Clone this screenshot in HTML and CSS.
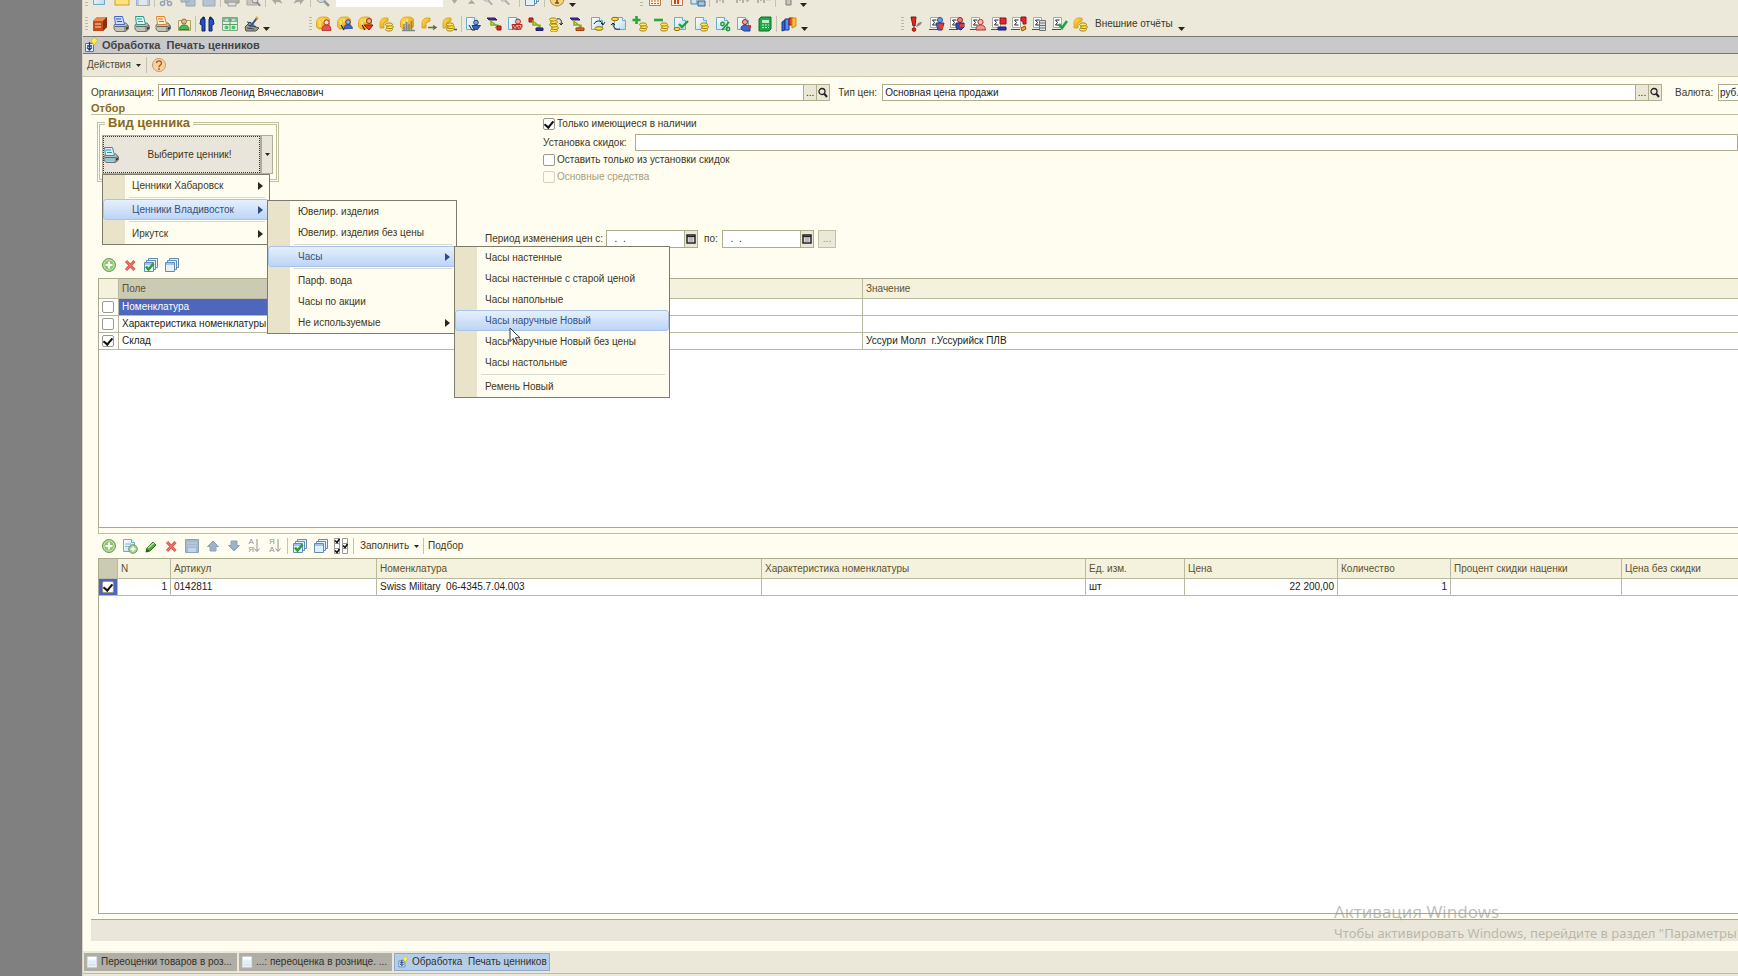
FILE: index.html
```html
<!DOCTYPE html>
<html lang="ru">
<head>
<meta charset="utf-8">
<title>Обработка Печать ценников</title>
<link rel="stylesheet" href="styles.css">
</head>
<body>
<svg class="sprite" aria-hidden="true">
  <defs>
    <linearGradient id="gold" x1="0" y1="0" x2="1" y2="1"><stop offset="0" stop-color="#ffe45a"/><stop offset="1" stop-color="#e09400"/></linearGradient>
    <linearGradient id="pageFill" x1="0" y1="0" x2="1" y2="1"><stop offset="0" stop-color="#fff"/><stop offset="1" stop-color="#b5dcec"/></linearGradient>
  </defs>
  <symbol id="doc" viewBox="0 0 16 16"><path d="M1.500 1.500h8l3 3v9h-11z" fill="url(#pageFill)" stroke="#6aacca"/><path d="M9.500 1.500v3h3" fill="#fff" stroke="#6aacca"/></symbol>
  <symbol id="coins" viewBox="0 0 16 16"><g fill="#ffe65a" stroke="#a07a08" stroke-width=".9"><ellipse cx="10" cy="13.500" rx="3.500" ry="1.600"/><ellipse cx="11" cy="11" rx="3.500" ry="1.600"/><ellipse cx="10" cy="8.500" rx="3.500" ry="1.600"/></g></symbol>
  <symbol id="bag" viewBox="0 0 16 16"><path d="M.5 11V7c0-4 2.500-6 6-6h4l3 2v8l-4 2H3z" fill="url(#gold)" stroke="#dd9a14" stroke-width=".8"/><path d="M4 5v6M7 3v3" stroke="#fff4a8"/></symbol>
  <symbol id="bagS" viewBox="0 0 16 16"><path d="M1 12V8c0-4 2-6 5-6h3v3L5 7v5z" fill="url(#gold)" stroke="#dd9a14" stroke-width=".8"/></symbol>
  <symbol id="manR" viewBox="0 0 16 16"><circle cx="10.500" cy="6.500" r="2.600" fill="#ffd9b8" stroke="#a33"/><path d="M6 14.500c0-4 1.500-5.500 4.500-5.500s4.500 1.500 4.500 5.500z" fill="#e8524a" stroke="#a31c18" stroke-width=".7"/></symbol>
  <symbol id="manB" viewBox="0 0 16 16"><circle cx="11" cy="6" r="2.300" fill="#8fb2ea" stroke="#3b3f8a"/><path d="M4 9l3 5M7 11.500h3" stroke="#222" stroke-width="1.200"/><path d="M7 12.500c0-3 1.500-4 4-4s4 1 4.500 4z" fill="#3b68ce" stroke="#213c96" stroke-width=".7"/></symbol>
  <symbol id="sigma" viewBox="0 0 16 16"><path d="M1.500 1.500h8v10h-8z" fill="#fff" stroke="#aaa"/><path d="M7.500 4h-4l2 2.500-2 2.500h4" fill="none" stroke="#222"/><path d="M0 13.500h9" stroke="#334b9c"/></symbol>
  <symbol id="printer" viewBox="0 0 16 16"><path d="M1 9l3-2h9l2.500 3v3l-3 2.500H3L1 13z" fill="#c3c3b8" stroke="#666" stroke-width=".9"/><path d="M2 10.500h10l3-1M12 11v4" stroke="#666" fill="none"/><path d="M13 11.500l2-1v2l-2 1.500z" fill="#333"/></symbol>
  <symbol id="flow" viewBox="0 0 16 16"><path d="M5 4v5h6M6 6l6 5M9 11.500h3v-3" fill="none" stroke="#8aac1c" stroke-width="1.600"/></symbol>
  <symbol id="plus" viewBox="0 0 16 16"><circle cx="8" cy="8" r="6.500" fill="#8cc56a" stroke="#6f9c60"/><circle cx="8" cy="8" r="5.200" fill="none" stroke="#d7efc8" stroke-width=".8"/><path d="M8 4.500v7M4.500 8h7" stroke="#fff" stroke-width="2.200"/></symbol>
  <symbol id="cross" viewBox="0 0 16 16"><path d="M4 4l8.500 9M12.500 4L4 13" stroke="#d9534a" stroke-width="3"/><path d="M4 4l8.500 9M12.500 4L4 13" stroke="#f08a80" stroke-width="1"/></symbol>
  <symbol id="stack" viewBox="0 0 16 16"><g fill="#e4f1fb" stroke="#5f8db3"><path d="M5.500 1.500h9v9h-9z"/><path d="M3.500 3.500h9v9h-9z"/><path d="M1.500 5.500h9v9h-9z"/></g><path d="M2 6h8v2H2z" fill="#9cc6ea"/></symbol>
  <symbol id="stackCheck" viewBox="0 0 16 16"><use href="#stack"/><path d="M3 9.500l2.500 3 5-6" fill="none" stroke="#2f9a3e" stroke-width="2.600"/></symbol>
  <symbol id="lens" viewBox="0 0 12 12"><circle cx="5" cy="4.500" r="3" fill="none" stroke="#222" stroke-width="1.300"/><path d="M7.500 7l2.500 3" stroke="#222" stroke-width="2"/></symbol>
  <symbol id="cal" viewBox="0 0 10 10"><path d="M1 1h8v8H1z" fill="#fff" stroke="#222" stroke-width="1.500"/><path d="M1 2.500h8" stroke="#222" stroke-width="1.500"/><path d="M2 5h6M2 7h6M4 3v5M6 3v5" stroke="#777" stroke-width=".6"/></symbol>
  <symbol id="proc" viewBox="0 0 16 16"><path d="M2.500 6.500h8v8h-8z" fill="#e8f1fa" stroke="#5277a4"/><path d="M6.500 5v8M4 10.500l2.500 2.500L9 10.500M4 9h5" stroke="#1b3f7a" fill="none" stroke-width="1.300"/><path d="M11 0l3.500 3.500L11 8 8 4z" fill="#ffee4d" stroke="#d2b42a" stroke-width=".8"/></symbol>
  <symbol id="paper" viewBox="0 0 16 16"><path d="M1.500.5h13v15h-13z" fill="#fff" stroke="#b5c4ce"/><path d="M3 5h10v9H3z" fill="#d5e7f3"/><path d="M3 6.500h10M3 9.500h10" stroke="#fff"/></symbol>
  <symbol id="down" viewBox="0 0 7 4"><path d="M0 0h7L3.500 4z" fill="#2e2614"/></symbol>
  <symbol id="right" viewBox="0 0 5 8"><path d="M0 0l5 4-5 4z" fill="currentColor"/></symbol>
</svg>

<div class="desktop">
<main class="window">

  <header class="toolbars">
    <div class="bar bar-top">
      <span class="grip"></span>
      <div class="group t-a">
        <svg class="ic"><use href="#doc"/></svg>
        <svg class="ic" viewBox="0 0 16 16"><path d="M1 3h5l1 2h8v9H1z" fill="#ffe27a" stroke="#c9a02d"/></svg>
        <svg class="ic" viewBox="0 0 16 16"><path d="M1.500 1.500h13v13h-13z" fill="#b9cadb" stroke="#9cb0c4"/><path d="M4 9h8v5H4z" fill="#dfe7ee"/></svg>
      </div>
      <span class="sep"></span>
      <div class="group t-a">
        <svg class="ic" viewBox="0 0 16 16"><path d="M5 1l5 10M11 1L6 11" stroke="#93a2b8" stroke-width="1.500"/><circle cx="4.500" cy="12.500" r="2" fill="none" stroke="#93a2b8" stroke-width="1.500"/><circle cx="11.500" cy="12.500" r="2" fill="none" stroke="#93a2b8" stroke-width="1.500"/></svg>
        <svg class="ic" viewBox="0 0 16 16"><path d="M1 2h8v9H1zM6 6h9v9H6z" fill="#b3c0cd" stroke="#94a6b9"/></svg>
        <svg class="ic" viewBox="0 0 16 16"><path d="M2 2h12v13H2z" fill="#b7c3d1" stroke="#9baabb"/></svg>
      </div>
      <span class="sep"></span>
      <div class="group t-b">
        <svg class="ic" viewBox="0 0 16 16"><path d="M1 7h14v5H1z" fill="#b5b2ab" stroke="#918f89"/><path d="M4 11h8v4H4z" fill="#ddd" stroke="#999"/></svg>
        <svg class="ic" viewBox="0 0 16 16"><path d="M1 1h10v13H1z" fill="#c9c6bd" stroke="#aaa79f"/><circle cx="9" cy="9" r="3" fill="#ddd" stroke="#888"/><path d="M11 11l3 4" stroke="#888" stroke-width="2"/></svg>
      </div>
      <span class="sep"></span>
      <div class="group t-b">
        <svg class="ic" viewBox="0 0 16 16"><path d="M3 9l4-4v3c4 0 6 2 6 5-2-2-3-2-6-2v3z" fill="#aaa8a0"/></svg>
        <svg class="ic" viewBox="0 0 16 16"><path d="M13 9L9 5v3c-4 0-6 2-6 5 2-2 3-2 6-2v3z" fill="#aaa8a0"/></svg>
      </div>
      <span class="sep"></span>
      <div class="group t-c t-find">
        <svg class="ic" viewBox="0 0 16 16"><circle cx="6" cy="7" r="4.500" fill="#cfd6dd" stroke="#9aa0a6"/><path d="M9 10l5 5" stroke="#999" stroke-width="2.500"/></svg>
      </div>
      <input class="search" type="text" aria-label="Поиск">
      <div class="group t-d">
        <svg class="ic" viewBox="0 0 16 16"><path d="M5 9h6l-3 4z" fill="#aaa8a0"/></svg>
        <svg class="ic" viewBox="0 0 16 16"><path d="M8 9l4 4H4z" fill="#aaa8a0"/></svg>
        <svg class="ic" viewBox="0 0 16 16"><circle cx="6" cy="7" r="3.500" fill="#ddd" stroke="#aaa"/><path d="M8 10l4 4" stroke="#aaa" stroke-width="2"/></svg>
        <svg class="ic" viewBox="0 0 16 16"><circle cx="6" cy="7" r="3.500" fill="#ddd" stroke="#aaa"/><path d="M8 10l4 4" stroke="#aaa" stroke-width="2"/></svg>
      </div>
      <span class="sep"></span>
      <div class="group t-c"><svg class="ic"><use href="#stack"/></svg></div>
      <span class="sep"></span>
      <div class="group t-c"><svg class="ic" viewBox="0 0 16 16"><circle cx="8" cy="8" r="7" fill="#f6d27c" stroke="#b5883a"/><path d="M8 6v6M6 12h4" stroke="#7a5520" stroke-width="1.600"/></svg></div>
      <svg class="drop drop-top"><use href="#down"/></svg>
      <span class="grip grip-calc"></span>
      <div class="group t-a">
        <svg class="ic" viewBox="0 0 16 16"><path d="M2.500 1.500h11v13h-11z" fill="#fff3dd" stroke="#c07a4a"/><path d="M4 7h8M4 10h8M4 12.500h8" stroke="#c0602f" stroke-dasharray="2 1"/></svg>
        <svg class="ic" viewBox="0 0 16 16"><path d="M2.500 1.500h11v13h-11z" fill="#fdeee6" stroke="#c77459"/><path d="M9 5v8M6 8v5" stroke="#d0431f" stroke-width="2"/></svg>
        <svg class="ic" viewBox="0 0 16 16"><path d="M1 8h6v5H1z" fill="#cfe5f5" stroke="#4f86b4"/><path d="M8 10h7v5H8z" fill="#9cc6e0" stroke="#33658d"/></svg>
      </div>
      <span class="sep"></span>
      <div class="group t-a">
        <svg class="ic" viewBox="0 0 16 16"><path d="M4 12V5l3 4 3-4v7" fill="none" stroke="#aaa8a0" stroke-width="1.700"/></svg>
        <svg class="ic" viewBox="0 0 16 16"><path d="M2 12V5l3 4 3-4v7M10 8.500h5M12.500 6v5" fill="none" stroke="#aaa8a0" stroke-width="1.700"/></svg>
        <svg class="ic" viewBox="0 0 16 16"><path d="M2 12V5l3 4 3-4v7M10 8.500h5" fill="none" stroke="#aaa8a0" stroke-width="1.700"/></svg>
      </div>
      <span class="sep"></span>
      <div class="group t-c"><svg class="ic" viewBox="0 0 16 16"><path d="M6 2h5v12H6z" fill="#c6c4bb" stroke="#807e76"/></svg></div>
      <svg class="drop drop-top"><use href="#down"/></svg>
    </div>

    <div class="bar bar-main">
      <span class="grip"></span>
      <div class="group m-a">
        <svg class="ic" viewBox="0 0 16 16"><path d="M1 5l4-4h10v10l-4 4H1z" fill="#c44c1c"/><path d="M1 5l4-4h10l-4 4z" fill="#e98a4c"/><path d="M11 5l4-4v10l-4 4z" fill="#8c300e"/><path d="M3 8h6M3 11h6" stroke="#ffd9a5"/></svg>
        <svg class="ic" viewBox="0 0 16 16"><use href="#printer"/><path d="M1.500.5h8l2 8h-9z" fill="#cfdcff" stroke="#4668c8"/><path d="M3 3h5M4 5.500h5" stroke="#3454b8"/></svg>
        <svg class="ic" viewBox="0 0 16 16"><use href="#printer"/><path d="M1.500.5h8l2 8h-9z" fill="#e0f6f0" stroke="#2d9a8a"/><path d="M3 3h5M4 5.500h5" stroke="#26a08c"/></svg>
        <svg class="ic" viewBox="0 0 16 16"><use href="#printer"/><path d="M1.500.5h8l2 8h-9z" fill="#fff0d4" stroke="#e0872a"/><path d="M3 3h5M4 5.500h5" stroke="#e05f20"/></svg>
        <svg class="ic" viewBox="0 0 16 16"><path d="M2.500 4.500h12v10h-12z" fill="#f7efc0" stroke="#a9a066"/><circle cx="8" cy="5.500" r="2.500" fill="#e9b48c" stroke="#9a6b3a"/><path d="M3.500 13.500c0-3.500 2-4.500 4.500-4.500s5 1 5 4.500z" fill="#47b866" stroke="#25823f"/></svg>
      </div>
      <span class="sep"></span>
      <div class="group m-b">
        <svg class="ic" viewBox="0 0 16 16"><path d="M2 3l3-1 1 1v12H3V9L1 8zM14 3l-3-1-1 1v12h3V9l2-1z" fill="#2250c8" stroke="#10236b"/><circle cx="4.500" cy="2" r="1.500" fill="#17235f"/><circle cx="11.500" cy="2" r="1.500" fill="#17235f"/></svg>
        <svg class="ic" viewBox="0 0 16 16"><path d="M.5 1.500h15v13H.5z" fill="#dff3df" stroke="#7da588"/><path d="M1 2h14v4H1z" fill="#86b896"/><path d="M8 2v12M1 8.500h14" stroke="#5f9a6e"/><path d="M3 4h3M10 4h3" stroke="#fff"/><circle cx="4.500" cy="11.500" r="2" fill="#45c868"/><circle cx="11.500" cy="11.500" r="2" fill="#45c868"/></svg>
        <svg class="ic" viewBox="0 0 16 16"><path d="M1 11l5-5 6 5 3 1-3 3H2z" fill="#9ca07c" stroke="#4c4f40"/><path d="M3 6l4 1M4 9l8 2M3 12l7 1" stroke="#2c436e"/><path d="M6 11l7-9" stroke="#35548e" stroke-width="2"/><path d="M12 1l2 2" stroke="#d7a63a" stroke-width="2"/></svg>
      </div>
      <svg class="drop drop-main"><use href="#down"/></svg>
      <span class="grip grip-second"></span>
      <div class="group m-c">
        <svg class="ic"><use href="#bag"/><use href="#manR"/></svg>
        <svg class="ic"><use href="#bag"/><use href="#manB"/></svg>
        <svg class="ic" viewBox="0 0 16 16"><use href="#bag"/><circle cx="11" cy="5" r="2.500" fill="#f2ad8c" stroke="#8c2c1c"/><path d="M4 9l3 5" stroke="#222" stroke-width="1.200"/><path d="M6 9h9l-4 5z" fill="#e23a2c" stroke="#8c1b10"/></svg>
        <svg class="ic"><use href="#bagS"/><use href="#coins"/></svg>
        <svg class="ic" viewBox="0 0 16 16"><use href="#bag"/><path d="M4 15V8M6.500 15V6M9 15V8M11.500 15V5M2 14.500h13" stroke="#7a868e" stroke-width="1.400"/></svg>
        <svg class="ic" viewBox="0 0 16 16"><use href="#bagS"/><path d="M7 11.500h7M12 9.500l3 2-3 2" stroke="#686a50" stroke-width="1.500" fill="none"/></svg>
        <svg class="ic" viewBox="0 0 16 16"><use href="#bagS"/><use href="#coins" x="-2"/><path d="M12 13.500h3" stroke="#555" stroke-width="1.500"/></svg>
      </div>
      <span class="sep"></span>
      <div class="group m-d">
        <svg class="ic" viewBox="0 0 16 16"><use href="#doc"/><circle cx="11" cy="6.500" r="2.300" fill="#7aa5da" stroke="#24478a"/><path d="M4 9l3 5h3" stroke="#222" fill="none"/><path d="M7 9.500h8.500l-3 4H9z" fill="#3464b4" stroke="#1f3e7e"/></svg>
        <svg class="ic" viewBox="0 0 16 16"><path d="M1 2h8l2 2H3z" fill="#5130b4" stroke="#2c1973"/><use href="#flow"/><path d="M11 10h4v4h-4z" fill="#e3262a" stroke="#961014"/></svg>
        <svg class="ic" viewBox="0 0 16 16"><use href="#doc"/><circle cx="11" cy="5.500" r="2.500" fill="#f7a49c" stroke="#b2362c"/><path d="M5 8.500h10v3l-3 2-6-1z" fill="#f0948c" stroke="#ad2b22"/><path d="M5 14l3-5 3 5M9 14l3-4 2 4" stroke="#a03830" fill="none"/></svg>
        <svg class="ic" viewBox="0 0 16 16"><path d="M1 2h4v4H1z" fill="#e3262a" stroke="#961014"/><use href="#flow"/><path d="M8 12h7v2.500H8z" fill="#3430a4" stroke="#1f1b6e"/></svg>
        <svg class="ic" viewBox="0 0 16 16"><use href="#coins" x="-5" y="-5"/><use href="#coins" x="-4" y="1"/><path d="M9 3c4-1 5 2 4 5M11.500 7l1.500 2 2-2" fill="none" stroke="#222"/></svg>
        <svg class="ic" viewBox="0 0 16 16"><path d="M1 2h8l2 2H3z" fill="#5130b4" stroke="#2c1973"/><use href="#flow"/><path d="M7 12h8v2.500H7z" fill="#e96c20" stroke="#9a3d08"/></svg>
        <svg class="ic" viewBox="0 0 16 16"><use href="#doc"/><path d="M4 8c2-4 7-4 9 0M11 7l2 2 2-3" fill="none" stroke="#222"/><ellipse cx="9" cy="12.500" rx="4" ry="1.800" fill="#ffe04a" stroke="#8f6c00"/></svg>
        <svg class="ic" viewBox="0 0 16 16"><use href="#doc" x="2"/><path d="M2 8c0 4 3 6 7 5M0 9l2-2 2 2" fill="none" stroke="#222"/><ellipse cx="4" cy="3" rx="3.500" ry="1.700" fill="#ffe04a" stroke="#8f6c00"/></svg>
        <svg class="ic" viewBox="0 0 16 16"><use href="#coins" x="1"/><path d="M4.500 0v8M.5 4h8" stroke="#2ba63a" stroke-width="2.600"/></svg>
        <svg class="ic" viewBox="0 0 16 16"><use href="#coins" x="1"/><path d="M1 4h9" stroke="#2ba63a" stroke-width="2.600"/></svg>
        <svg class="ic" viewBox="0 0 16 16"><use href="#doc"/><path d="M6 8l3 3 6-6" fill="none" stroke="#23a04a" stroke-width="2.400"/><ellipse cx="4" cy="13" rx="3" ry="1.600" fill="#ffe04a" stroke="#8f6c00"/></svg>
        <svg class="ic"><use href="#doc"/><use href="#coins"/></svg>
        <svg class="ic" viewBox="0 0 16 16"><use href="#doc"/><path d="M7 14l7-8" stroke="#1e9a3e" stroke-width="1.700"/><circle cx="7.500" cy="8" r="1.700" fill="none" stroke="#1e9a3e" stroke-width="1.500"/><circle cx="13" cy="13" r="1.700" fill="none" stroke="#1e9a3e" stroke-width="1.500"/></svg>
        <svg class="ic" viewBox="0 0 16 16"><use href="#doc"/><circle cx="9" cy="6" r="2.500" fill="#f2a38c" stroke="#a3202a"/><path d="M5 13c0-3 2-4 4-4l5 1v5H8z" fill="#3b68ce" stroke="#213c96"/><path d="M10 9h5v3h-3z" fill="#e1302a"/></svg>
        <svg class="ic" viewBox="0 0 16 16"><path d="M2 3l2-2h10v12l-2 2H2z" fill="#1fa748" stroke="#0f6f2c"/><path d="M5 4h7v3H5z" fill="#b9f0c3"/><path d="M5 9h7M5 11.500h7" stroke="#c9f5cf" stroke-dasharray="2 1"/></svg>
      </div>
      <span class="sep"></span>
      <div class="group m-e">
        <svg class="ic" viewBox="0 0 16 16"><path d="M1 6l3-2v10l-3 1z" fill="#2f66d8" stroke="#17388e"/><path d="M4 3h4v11H4z" fill="#5b91ee" stroke="#17388e"/><path d="M8 2h4v7H8z" fill="#e3402c" stroke="#8f1c10"/><path d="M11 2h4v8l-4 2z" fill="#ffbf2e" stroke="#c88c10"/></svg>
      </div>
      <svg class="drop drop-main"><use href="#down"/></svg>
      <span class="grip grip-third"></span>
      <div class="group m-f">
        <svg class="ic" viewBox="0 0 16 16"><path d="M3 1h5L7 10H5z" fill="#e0291f" stroke="#941209"/><circle cx="6" cy="13.500" r="1.800" fill="#e0291f" stroke="#941209"/><path d="M8 11c1-4 3-5 6-5-1 3-3 4-6 5z" fill="#8b8678"/></svg>
        <svg class="ic" viewBox="0 0 16 16"><use href="#sigma"/><circle cx="11" cy="4" r="2.500" fill="#69a2e8" stroke="#2450a0"/><path d="M7 7h8l-2 7H9z" fill="#3b68ce" stroke="#213c96"/><path d="M9 8h5v5h-4z" fill="#e33830"/></svg>
        <svg class="ic" viewBox="0 0 16 16"><use href="#sigma"/><circle cx="11" cy="4" r="2.500" fill="#ef8078" stroke="#a32018"/><path d="M7 7h8v4l-3 3-5-2z" fill="#3c47b4" stroke="#23297c"/><path d="M11 8h4v3h-4z" fill="#e33830"/></svg>
        <svg class="ic" viewBox="0 0 16 16"><use href="#sigma"/><circle cx="10.500" cy="6" r="2.600" fill="#f7c4b0" stroke="#a33"/><path d="M6 14c0-4 1.500-5 4.500-5s4.500 1 5 5z" fill="#f0948c" stroke="#a33830"/></svg>
        <svg class="ic" viewBox="0 0 16 16"><use href="#sigma"/><path d="M9 2h6v6H9z" fill="#e3262a" stroke="#961014"/><path d="M7 11h8v3H7z" fill="#2f35b4" stroke="#1b1f70"/></svg>
        <svg class="ic" viewBox="0 0 16 16"><use href="#sigma"/><path d="M10 1h5v7h-3V5h-2z" fill="#e3262a" stroke="#961014"/><path d="M10 12l4-2 1 3-4 2z" fill="#f0a42c" stroke="#8a5a08"/></svg>
        <svg class="ic" viewBox="0 0 16 16"><use href="#sigma"/><path d="M7.500 4.500h6v10h-6z" fill="#dde0e2" stroke="#6d7478"/><path d="M7 7h7M7 9.500h7M7 12h7" stroke="#6d7478"/></svg>
        <svg class="ic" viewBox="0 0 16 16"><use href="#sigma"/><path d="M7 8l3 4 5-7" fill="none" stroke="#23a04a" stroke-width="2.600"/></svg>
        <svg class="ic"><use href="#bagS"/><use href="#coins"/></svg>
      </div>
      <button class="text-button reports" type="button">Внешние отчёты</button>
      <svg class="drop drop-main drop-reports"><use href="#down"/></svg>
    </div>
  </header>

  <h1 class="titlebar"><svg class="ic"><use href="#proc"/></svg><span>Обработка&nbsp; Печать ценников</span></h1>

  <div class="actions">
    <button class="text-button" type="button">Действия <svg class="caret"><use href="#down"/></svg></button>
    <span class="sep"></span>
    <button class="icon-button help" type="button" aria-label="Справка">
      <svg class="ic" viewBox="0 0 16 16"><circle cx="8" cy="8" r="6.500" fill="#fbd3a0" stroke="#c99a68"/><path d="M5.500 6.300c0-3.200 5-3.200 5 0 0 2-2.500 1.700-2.500 4" fill="none" stroke="#a0602c" stroke-width="1.400"/><circle cx="8" cy="12" r=".9" fill="#a0602c"/></svg>
    </button>
  </div>

  <form class="form">
    <div class="row-head">
      <label for="org">Организация:</label>
      <div class="combo combo-org"><input id="org" type="text" value="ИП Поляков Леонид Вячеславович"><button type="button">...</button><button type="button" aria-label="Открыть"><svg class="lens"><use href="#lens"/></svg></button></div>
      <label class="lab-type" for="ptype">Тип цен:</label>
      <div class="combo combo-type"><input id="ptype" type="text" value="Основная цена продажи"><button type="button">...</button><button type="button" aria-label="Открыть"><svg class="lens"><use href="#lens"/></svg></button></div>
      <label class="lab-cur" for="cur">Валюта:</label>
      <div class="combo combo-cur"><input id="cur" type="text" value="руб."></div>
    </div>

    <h2 class="section">Отбор</h2>

    <div class="filters">
      <fieldset class="kind">
        <legend>Вид ценника</legend>
        <div class="split">
          <button class="split-main" type="button">
            <svg class="ic" viewBox="0 0 16 16"><use href="#printer"/><path d="M1.500.5h8l2 8h-9z" fill="#d3f1f5" stroke="#3f8ea6"/><path d="M3 3h5M4 5.500h5" stroke="#3f8ea6"/><path d="M2 11h10v3H2z" fill="#8fc6d4"/></svg>
            <span>Выберите ценник!</span>
          </button>
          <button class="split-drop" type="button" aria-label="Открыть меню"><svg class="caret"><use href="#down"/></svg></button>

          <ul class="menu menu-city">
            <li><button type="button">Ценники Хабаровск</button><svg class="more"><use href="#right"/></svg></li>
            <li class="line"></li>
            <li class="open"><button type="button">Ценники Владивосток</button><svg class="more"><use href="#right"/></svg>
              <ul class="menu menu-goods">
                <li><button type="button">Ювелир. изделия</button></li>
                <li><button type="button">Ювелир. изделия без цены</button></li>
                <li class="line"></li>
                <li class="open"><button type="button">Часы</button><svg class="more"><use href="#right"/></svg>
                  <ul class="menu menu-watch">
                    <li><button type="button">Часы настенные</button></li>
                    <li><button type="button">Часы настенные с старой ценой</button></li>
                    <li><button type="button">Часы напольные</button></li>
                    <li class="open"><button type="button">Часы наручные Новый</button>
                      <svg class="pointer" viewBox="0 0 12 18"><path d="M1 1v13.500l3.200-3 2.300 5 2-1-2.200-4.700H11z" fill="#fff" stroke="#333"/></svg>
                    </li>
                    <li><button type="button">Часы наручные Новый без цены</button></li>
                    <li><button type="button">Часы настольные</button></li>
                    <li class="line"></li>
                    <li><button type="button">Ремень Новый</button></li>
                  </ul>
                </li>
                <li class="line"></li>
                <li><button type="button">Парф. вода</button></li>
                <li><button type="button">Часы по акции</button></li>
                <li><button type="button">Не используемые</button><svg class="more"><use href="#right"/></svg></li>
              </ul>
            </li>
            <li class="line"></li>
            <li><button type="button">Иркутск</button><svg class="more"><use href="#right"/></svg></li>
          </ul>
        </div>
      </fieldset>

      <div class="options">
        <label class="check"><input type="checkbox" checked>Только имеющиеся в наличии</label>
        <div class="discount"><label for="disc">Установка скидок:</label><input id="disc" class="field" type="text"></div>
        <label class="check"><input type="checkbox">Оставить только из установки скидок</label>
        <label class="check muted"><input type="checkbox" disabled>Основные средства</label>
      </div>
    </div>

    <div class="period">
      <label for="from">Период изменения цен с:</label>
      <div class="combo combo-date"><input id="from" type="text" value="  .  ."><button type="button" aria-label="Календарь"><svg class="cal"><use href="#cal"/></svg></button></div>
      <label for="to">по:</label>
      <div class="combo combo-date"><input id="to" type="text" value="  .  ."><button type="button" aria-label="Календарь"><svg class="cal"><use href="#cal"/></svg></button></div>
      <button class="dots" type="button">...</button>
    </div>

    <div class="tools tools-filter">
      <button class="icon-button" type="button" aria-label="Добавить"><svg class="ic"><use href="#plus"/></svg></button>
      <button class="icon-button" type="button" aria-label="Удалить"><svg class="ic"><use href="#cross"/></svg></button>
      <button class="icon-button" type="button" aria-label="Включить все"><svg class="ic"><use href="#stackCheck"/></svg></button>
      <button class="icon-button" type="button" aria-label="Выключить все"><svg class="ic"><use href="#stack"/></svg></button>
    </div>

    <div class="grid grid-filter">
      <table>
        <colgroup><col class="c-mark"><col class="c-field"><col class="c-cmp"><col></colgroup>
        <thead><tr><th></th><th class="active">Поле</th><th></th><th>Значение</th></tr></thead>
        <tbody>
          <tr><td class="mark"><input type="checkbox" aria-label="Номенклатура"></td><td class="selected">Номенклатура</td><td></td><td></td></tr>
          <tr><td class="mark"><input type="checkbox" aria-label="Характеристика номенклатуры"></td><td>Характеристика номенклатуры</td><td></td><td></td></tr>
          <tr><td class="mark"><input type="checkbox" checked aria-label="Склад"></td><td>Склад</td><td></td><td>Уссури Молл&nbsp; г.Уссурийск ПЛВ</td></tr>
        </tbody>
      </table>
    </div>
    <div class="splitter"></div>

    <div class="tools tools-goods">
      <div class="group g-a">
        <button class="icon-button" type="button" aria-label="Добавить"><svg class="ic"><use href="#plus"/></svg></button>
        <button class="icon-button" type="button" aria-label="Скопировать"><svg class="ic" viewBox="0 0 16 16"><use href="#doc"/><path d="M3 6h6M3 8.500h5" stroke="#8cb7cc"/><circle cx="11" cy="11" r="4.300" fill="#a5d58e" stroke="#6c9d63"/><path d="M11 8.500v5M8.500 11h5" stroke="#fff" stroke-width="1.600"/></svg></button>
        <button class="icon-button" type="button" aria-label="Изменить"><svg class="ic" viewBox="0 0 16 16"><path d="M3 14l1-4 6-6 3 3-6 6z" fill="#4fae37" stroke="#28761c"/><path d="M5 10l6-5" stroke="#b5e59c" stroke-width="1.500"/><path d="M3 14l1-3 2 2z" fill="#3b3b22"/></svg></button>
        <button class="icon-button" type="button" aria-label="Удалить"><svg class="ic"><use href="#cross"/></svg></button>
        <button class="icon-button" type="button" aria-label="Записать"><svg class="ic" viewBox="0 0 16 16"><path d="M1.500 1.500h13v13h-13z" fill="#a3b8cf" stroke="#8fa5bd"/><path d="M3 5h10M3 8h10" stroke="#c7d4e1"/><path d="M4 10h8v4H4z" fill="#c7d4e1"/></svg></button>
        <button class="icon-button" type="button" aria-label="Вверх"><svg class="ic" viewBox="0 0 16 16"><path d="M8 3l5.500 5.500H11V13H5V8.500H2.500z" fill="#9eb2c6" stroke="#8fa3b8"/></svg></button>
        <button class="icon-button" type="button" aria-label="Вниз"><svg class="ic" viewBox="0 0 16 16"><path d="M8 13L2.500 7.500H5V3h6v4.500h2.500z" fill="#9eb2c6" stroke="#8fa3b8"/></svg></button>
        <button class="icon-button sort" type="button" aria-label="По возрастанию"><span>А<br>Я</span><svg class="sort-arrow" viewBox="0 0 6 14"><path d="M3 0v12M.5 9.500L3 12.500 5.500 9.500" fill="none" stroke="#8d9299"/></svg></button>
        <button class="icon-button sort" type="button" aria-label="По убыванию"><span>Я<br>А</span><svg class="sort-arrow" viewBox="0 0 6 14"><path d="M3 0v12M.5 9.500L3 12.500 5.500 9.500" fill="none" stroke="#8d9299"/></svg></button>
      </div>
      <span class="sep"></span>
      <div class="group g-b">
        <button class="icon-button" type="button" aria-label="Включить все"><svg class="ic"><use href="#stackCheck"/></svg></button>
        <button class="icon-button" type="button" aria-label="Выключить все"><svg class="ic"><use href="#stack"/></svg></button>
        <button class="icon-button" type="button" aria-label="Инвертировать"><svg class="ic" viewBox="0 0 16 16"><path d="M1.500.5h5v5h-5zM1.500 5.500h5v5h-5zM1.500 10.500h5v5h-5zM9.500.5h5v5h-5zM9.500 5.500h5v5h-5zM9.500 10.500h5v5h-5z" fill="#fff" stroke="#999"/><path d="M2 2.500l2 2L6.500 1M2 12.500l2 2 2.500-3.500M10 7.500l2 2L14.500 6" fill="none" stroke="#111" stroke-width="1.600"/></svg></button>
      </div>
      <span class="sep sep-fill"></span>
      <button class="text-button" type="button">Заполнить <svg class="caret"><use href="#down"/></svg></button>
      <span class="sep"></span>
      <button class="text-button" type="button">Подбор</button>
    </div>

    <div class="grid grid-goods">
      <table>
        <colgroup><col class="c-check"><col class="c-n"><col class="c-art"><col class="c-name"><col class="c-char"><col class="c-unit"><col class="c-price"><col class="c-qty"><col class="c-pct"><col></colgroup>
        <thead><tr><th class="active"></th><th>N</th><th>Артикул</th><th>Номенклатура</th><th>Характеристика номенклатуры</th><th>Ед. изм.</th><th>Цена</th><th>Количество</th><th>Процент скидки наценки</th><th>Цена без скидки</th></tr></thead>
        <tbody><tr><td class="mark current"><input type="checkbox" checked aria-label="Строка 1"></td><td class="num">1</td><td>0142811</td><td>Swiss Military&nbsp; 06-4345.7.04.003</td><td></td><td>шт</td><td class="num">22 200,00</td><td class="num">1</td><td></td><td></td></tr></tbody>
      </table>
    </div>
    <div class="status"></div>
  </form>
</main>

<footer class="tabs">
  <button class="tab" type="button"><svg class="tab-ic"><use href="#paper"/></svg><span>Переоценки товаров в роз...</span></button>
  <button class="tab" type="button"><svg class="tab-ic"><use href="#paper"/></svg><span>...: переоценка в рознице. ...</span></button>
  <button class="tab tab-on" type="button"><svg class="tab-ic"><use href="#proc"/></svg><span>Обработка&nbsp; Печать ценников</span></button>
</footer>

<aside class="watermark"><p class="wm-title">Активация Windows</p><p>Чтобы активировать Windows, перейдите в раздел "Параметры"</p></aside>
</div>
</body>
</html>
```

FILE: styles.css
```css
* { box-sizing: border-box; }
body {
  margin: 0;
  background: #808080;
  color: #40371c;
  font: 10px/14px "Liberation Sans", Arial, sans-serif;
  overflow: hidden;
}
button, input { font: inherit; color: inherit; margin: 0; padding: 0; border: 0; background: none; border-radius: 0; }
h1, h2, p, ul { margin: 0; padding: 0; }
svg { flex: none; display: block; }
.sprite { position: absolute; width: 0; height: 0; }

.desktop {
  position: relative;
  display: flex;
  flex-direction: column;
  height: 100vh;
  margin-left: 82px;
  background: #ebe7d9;
  border-left: 1px solid #d8d5c8;
  overflow: hidden;
}
.window { flex: 1; min-height: 0; display: flex; flex-direction: column; }

/* toolbars */
.toolbars { height: 36px; background: #ece8da; }
.bar { display: flex; align-items: center; }
.bar-top { height: 8px; align-items: flex-end; overflow: hidden; padding-bottom: 1px; }
.bar-main { height: 28px; padding-top: 3px; }
.group { display: flex; justify-content: space-between; flex: none; }
.ic { width: 16px; height: 16px; }
.grip { flex: none; width: 3px; height: 14px; margin: 0 4px 0 2px; background: repeating-linear-gradient(#bdb9aa 0 1px, transparent 1px 3px); }
.sep { flex: none; width: 1px; height: 16px; margin: 0 3px; background: #c5c2b4; }
.t-a { width: 59px; }
.t-b { width: 38px; }
.t-c { width: 18px; justify-content: center; }
.t-find { margin-right: 4px; }
.t-d { width: 66px; margin-right: 3px; }
.t-d .ic { width: 15px; }
.search { width: 107px; height: 22px; background: #fff; margin: 0 4px 0 0; flex: none; }
.drop { width: 7px; height: 4px; }
.drop-top { margin: 0 0 0 3px; }
.drop-main { margin: 10px 0 0 3px; }
.drop-reports { margin-left: 5px; }
.grip-calc { margin-left: 64px; }
.m-a { width: 100px; }
.m-b { width: 61px; }
.grip-second { margin-left: 39px; }
.m-c { width: 142px; }
.m-d { width: 308px; }
.m-e { width: 18px; justify-content: center; }
.grip-third { margin-left: 93px; }
.m-f { width: 181px; }
.text-button { display: flex; align-items: center; white-space: nowrap; }
.caret { width: 7px; height: 4px; margin-left: 5px; }
.reports { margin-left: 6px; }

.titlebar {
  display: flex;
  align-items: center;
  gap: 3px;
  height: 18px;
  background: #c9c9ca;
  border-top: 1px solid #737873;
  border-bottom: 1px solid #737873;
  font-size: 11px;
  font-weight: bold;
  color: #444;
}
.actions { display: flex; align-items: center; height: 23px; padding-left: 4px; border-bottom: 1px solid #c9c6ad; color: #5c5030; }
.actions .caret { width: 5px; height: 3px; }
.actions .sep { margin: 0 4px 0 5px; }
.icon-button { display: flex; align-items: center; justify-content: center; height: 16px; }

/* form */
.form { flex: 1; min-height: 0; display: flex; flex-direction: column; padding: 7px 0 10px 8px; background: #fffdf0; }
.row-head { display: flex; align-items: center; height: 17px; white-space: nowrap; }
.row-head label { flex: none; }
.row-head > label:first-child { width: 67px; }
.row-head .lab-type { width: 44px; margin-left: 8px; }
.row-head .lab-cur { width: 43px; margin-left: 13px; }
.combo { display: flex; height: 17px; border: 1px solid #b0ad8e; background: #fff; color: #1c1c17; }
.combo input { flex: 1; min-width: 0; padding-left: 2px; }
.combo button { flex: none; display: flex; align-items: center; justify-content: center; width: 13px; background: #ece8d8; border-left: 1px solid #b0ad8e; }
.combo-org { flex: 672 1 0; }
.combo-type { flex: 780 1 0; }
.combo-cur { flex: none; width: 20px; border-right: 0; }
.combo-cur input { padding-left: 1px; }
.lens { width: 12px; height: 12px; }
.section { height: 14px; border-bottom: 1px solid #c3c0a0; color: #8a6a1c; font-size: 11px; line-height: 15px; }

.filters { display: flex; height: 115px; }
.kind { position: relative; flex: none; width: 182px; height: 67px; margin: 0 264px 0 6px; padding: 4px 0 0 2px; border: 3px double #c3c0a0; }
.kind legend { margin-left: 3px; padding: 0 3px; color: #8a6a1c; font-size: 13px; font-weight: bold; line-height: 16px; }
.split { position: relative; display: flex; width: 171px; height: 39px; }
.split-main { flex: 1; display: flex; align-items: center; background: #e9e5da; border: 1px solid #b0ad9b; outline: 1px dotted #333; outline-offset: -2px; }
.split-main span { flex: 1; text-align: center; }
.split-drop { display: flex; align-items: center; justify-content: center; width: 12px; background: #e9e5da; border: 1px solid #b0ad9b; }
.split-drop .caret { width: 5px; height: 3px; margin: 0; }

.menu {
  position: absolute;
  z-index: 5;
  list-style: none;
  border: 1px solid #7d7b69;
  background: linear-gradient(90deg, #e9e4c9 22px, #fffdf0 22px);
  color: #40371c;
}
.menu li { position: relative; height: 21px; display: flex; align-items: center; border: 1px solid transparent; }
.menu li > button { flex: 1; height: 19px; text-align: left; padding-left: 28px; white-space: nowrap; }
.menu li.line { height: 3px; border: 0; margin-left: 26px; margin-right: 4px; background: linear-gradient(transparent 1px, #d9d9d2 1px 2px, transparent 2px); }
.menu li.open { background: linear-gradient(#e6f0fd, #bcd5f7); border-color: #a9c4e8; border-radius: 3px; color: #35517f; }
.menu .menu li > button { padding-left: 29px; }
.more { width: 5px; height: 8px; margin-right: 5px; color: #2a2818; }
.open > .more { color: #2c4d86; }
.menu-city { top: 39px; left: 0; width: 168px; }
.menu-goods { top: 0; left: calc(100% - 1px); width: 190px; }
.menu-watch { top: -1px; left: calc(100% - 1px); width: 216px; }
.pointer { position: absolute; z-index: 6; left: 53px; top: 16px; width: 12px; height: 18px; }

.options { flex: 1; display: flex; flex-direction: column; }
.check { display: flex; align-items: center; gap: 2px; height: 17px; }
.discount { display: flex; align-items: center; gap: 5px; margin-top: 2px; height: 17px; }
.discount label { width: 87px; white-space: nowrap; }
.field { flex: 1; height: 17px; padding: 0 3px; border: 1px solid #b0ad8e; background: #fff; }
input[type="checkbox"] { appearance: none; flex: none; width: 12px; height: 12px; border: 1px solid #99998a; border-radius: 2px; background: #fff; display: grid; place-items: center; }
input[type="checkbox"]:checked::before { content: ""; width: 4px; height: 7px; margin-bottom: 2px; border: solid #111; border-width: 0 2px 2px 0; transform: rotate(40deg); }
.muted { color: #a89c7a; }
.muted input[type="checkbox"] { border-color: #d5d1bb; background: #fffdf0; }

.period { display: flex; align-items: center; height: 18px; padding-left: 394px; white-space: nowrap; }
.period label { width: 121px; }
.combo-date { width: 92px; height: 18px; }
.combo-date input { white-space: pre; }
.cal { width: 10px; height: 10px; }
.combo-date + label { width: 18px; margin-left: 6px; }
.dots { width: 18px; height: 18px; margin-left: 4px; border: 1px solid #c3c0a8; background: #ece8d8; color: #888; }

.tools { display: flex; align-items: center; flex: none; padding-left: 10px; }
.tools-filter { height: 30px; gap: 5px; padding-top: 3px; }
.tools-goods { height: 24px; }
.tools .sep { margin: 0 4px; }
.tools .sep-fill { margin: 0 6px 0 4px; }
.tools .caret { width: 5px; height: 3px; }
.g-a { width: 182px; }
.g-b { width: 57px; }
.sort { width: 16px; color: #8d9299; font-size: 8px; line-height: 8px; }
.sort-arrow { width: 6px; height: 14px; }

/* tables */
.grid { margin-left: 7px; border: 1px solid #aaa98c; border-right: 0; background: #fff; overflow: hidden; }
.grid-filter { flex: 0 0 250px; }
.grid-goods { flex: 1; min-height: 0; margin-bottom: 5px; }
.grid table { width: 100%; table-layout: fixed; border-spacing: 0; }
.grid th, .grid td { height: 17px; padding: 0 3px; border-right: 1px solid #b9b8a0; border-bottom: 1px solid #b9b8a0; text-align: left; white-space: nowrap; overflow: hidden; color: #1c1c17; }
.grid th { height: 20px; background: #f4f1dd; color: #5f5130; font-weight: normal; }
.grid th:last-child, .grid td:last-child { border-right: 0; }
.grid th.active { background: #cbcab2; }
.grid td.selected { background: #4d67bd; color: #fff; }
.grid td.mark { padding: 0 0 0 3px; }
.grid td.current { background: #4d67bd; }
.grid td.num { text-align: right; }
.c-mark { width: 20px; }
.c-field { width: 342px; }
.c-cmp { width: 402px; }
.c-check { width: 19px; }
.c-n { width: 53px; }
.c-art { width: 206px; }
.c-name { width: 385px; }
.c-char { width: 324px; }
.c-unit { width: 99px; }
.c-price { width: 153px; }
.c-qty { width: 113px; }
.c-pct { width: 171px; }
.splitter { flex: none; height: 6px; margin-left: 7px; border-bottom: 1px solid #c3c0a0; border-left: 1px solid #c3c0a0; }
.status { flex: none; height: 22px; background: #eae6d9; border-top: 1px solid #a9a886; }

/* open windows */
.tabs { flex: none; display: flex; gap: 2px; height: 25px; padding: 2px 0 0 1px; background: linear-gradient(#ebe7d9 22px, #bcb9ab 22px 23px, #ebe7d9 23px); }
.tab { display: flex; align-items: center; gap: 3px; width: 153px; height: 18px; padding-left: 2px; background: #b0ada4; color: #33312c; white-space: nowrap; }
.tab-on { width: 156px; background: #b4cde8; border: 1px solid #8fa9c6; }
.tab-ic { width: 12px; height: 12px; }

.watermark { position: absolute; z-index: 9; left: 1251px; top: 901px; color: rgba(150, 150, 140, .6); font: 13px/20px "Noto Sans", "Open Sans", sans-serif; white-space: nowrap; pointer-events: none; }
.wm-title { font-size: 17px; line-height: 22px; }
```
